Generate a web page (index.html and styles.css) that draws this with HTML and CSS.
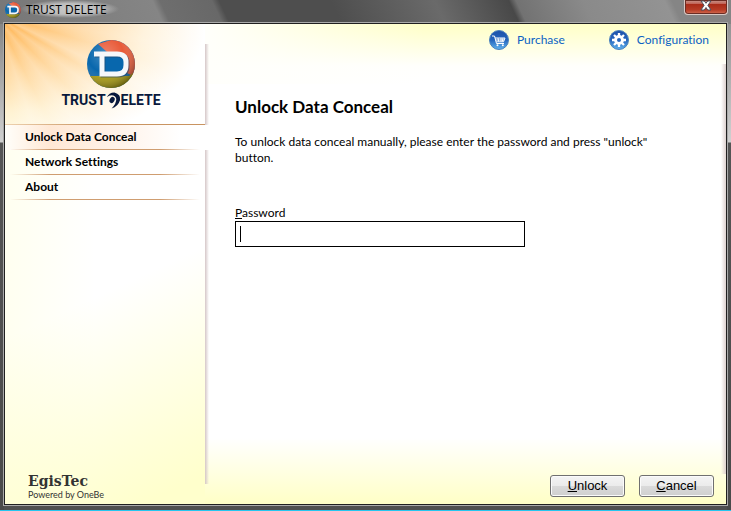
FILE: index.html
```html
<!DOCTYPE html>
<html lang="en">
<head>
<meta charset="utf-8">
<title>TRUST DELETE</title>
<link rel="stylesheet" href="styles.css">
</head>
<body>
<svg width="0" height="0" class="defs" aria-hidden="true">
  <defs>
    <radialGradient id="shade" cx="38%" cy="30%" r="75%">
      <stop offset="0" stop-color="#fff" stop-opacity=".25"/>
      <stop offset=".5" stop-color="#fff" stop-opacity="0"/>
      <stop offset="1" stop-color="#000" stop-opacity=".45"/>
    </radialGradient>
    <linearGradient id="blue" x1="0" y1="0" x2="0" y2="1">
      <stop offset="0" stop-color="#1d50a8"/>
      <stop offset=".5" stop-color="#2465bd"/>
      <stop offset="1" stop-color="#62b4ee"/>
    </linearGradient>
    <clipPath id="ball"><circle cx="24" cy="24" r="24"/></clipPath>
    <symbol id="globe" viewBox="0 0 48 48">
      <g clip-path="url(#ball)">
        <rect width="48" height="48" fill="#0867ad"/>
        <path d="M11 4L24 0H48V37L38 32L20 12Z" fill="#e85a38"/>
        <path d="M0 36H42L46 33V48H0Z" fill="#a99b0c"/>
        <rect width="48" height="48" fill="url(#shade)"/>
        <path d="M16 14H30Q39 14 39 22V25Q39 34 30 34H16Z" fill="#0867ad"/>
      </g>
      <path fill="none" stroke="#24466b" stroke-opacity=".6" stroke-width="5" d="M8 15H31Q40 15 40 23V26Q40 35 31 35H16V16"/>
      <path fill="none" stroke="#f5f7fa" stroke-width="5" d="M7 14H30Q39 14 39 22V25Q39 34 30 34H15V15"/>
    </symbol>
  </defs>
</svg>
<div class="window">
  <header class="titlebar">
    <svg class="app-icon"><use href="#globe"/></svg>
    <span class="app-title">TRUST DELETE</span>
    <button class="close" type="button" aria-label="Close">
      <svg viewBox="0 0 12 12" width="12" height="12"><path d="M1 1H4.300L6 3.300L7.700 1H11L7.900 5.300L11 10H7.700L6 7.500L4.300 10H1L4.100 5.300Z" fill="#fff" stroke="#4b4f5c" stroke-width="1"/></svg>
    </button>
  </header>
  <div class="client">
    <aside class="sidebar">
      <div class="brand">
        <svg class="brand-ball"><use href="#globe"/></svg>
        <div class="wordmark"><span>TRUST</span><svg viewBox="0 0 16 17" width="15" height="17"><path d="M1 5Q3 0 9 0Q16 2 15 8Q13 15 6 17Q11 12 11 7Q10 3 6 3Q3 3 1 5Z" fill="#08183c"/><ellipse cx="6.500" cy="8" rx="2.500" ry="3.500" transform="rotate(30 6.500 8)" fill="#08183c"/></svg><span>ELETE</span></div>
      </div>
      <nav class="nav">
        <a class="current" href="#unlock">Unlock Data Conceal</a>
        <a href="#network">Network Settings</a>
        <a href="#about">About</a>
      </nav>
      <footer class="maker"><strong>EgisTec</strong><span>Powered by OneBe</span></footer>
    </aside>
    <main class="main">
      <div class="links">
        <a href="#purchase"><svg viewBox="0 0 20 20" width="20" height="20"><circle cx="10" cy="10" r="9.500" fill="url(#blue)" stroke="#4a80bd" stroke-width="1"/><path d="M3 6H5.500L7.500 13.500H15M6 8H16L14.500 11.800H7.300M6.500 10H15.200M9 8L9.600 11.500M12 8V11.500M14 8L13.400 11.500" fill="none" stroke="#fff" stroke-width="1"/><circle cx="8.500" cy="15.200" r="1" fill="#fff"/><circle cx="13.800" cy="15.200" r="1" fill="#fff"/></svg>Purchase</a>
        <a href="#configuration"><svg viewBox="0 0 20 20" width="20" height="20"><circle cx="10" cy="10" r="9.500" fill="url(#blue)" stroke="#4a80bd" stroke-width="1"/><path d="M10 3V17M3 10H17M5 5L15 15M15 5L5 15" stroke="#fff" stroke-width="2.300"/><circle cx="10" cy="10" r="3.600" fill="none" stroke="#fff" stroke-width="2.600"/><circle cx="10" cy="10" r="2" fill="#2465bd"/></svg>Configuration</a>
      </div>
      <form class="unlock">
        <h1>Unlock Data Conceal</h1>
        <p>To unlock data conceal manually, please enter the password and press "unlock" button.</p>
        <label for="password"><u>P</u>assword</label>
        <div class="field"><input id="password" type="password"></div>
        <div class="actions">
          <button type="submit"><u>U</u>nlock</button>
          <button type="button"><u>C</u>ancel</button>
        </div>
      </form>
    </main>
  </div>
</div>
</body>
</html>
```
FILE: styles.css
```css
* { box-sizing: border-box; }
body {
  margin: 0;
  font: 12px/16px Lato, "Open Sans", sans-serif;
  font-variant-ligatures: none;
  color: #000;
}
a { text-decoration: none; }
.defs { position: absolute; }
.window {
  display: flex;
  flex-direction: column;
  min-height: 100vh;
  padding: 0 4px 5px;
  border-bottom: 1px solid #25c5ee;
  background:
    linear-gradient(65deg, #777 0, #858585 22%, #6e6e6e 23%, #686868 30%, #4e4e4e 31%, #4e4e4e 46%, #6a6a6a 60%, #484848 70%, #727272 71%, #8a8a8a 80%, #939393 91%, #858585 92%) top / 100% 24px no-repeat,
    linear-gradient(#777 0, #d0d0d0 142px, #555 143px, #4a4a4a 100%) left / 4px 100% no-repeat,
    linear-gradient(#888 0, #d0d0d0 142px, #555 143px, #4a4a4a 100%) right / 4px 100% no-repeat,
    #505050;
}
.titlebar {
  display: flex;
  align-items: flex-start;
  height: 23px;
}
.app-icon { width: 16px; height: 16px; margin: 2px 0 0 1px; }
.app-title {
  padding: 2px 12px 0 5px;
  font-family: "Open Sans", sans-serif;
  background: radial-gradient(ellipse closest-side, #c8c8c8 0, #bdbdbd 60%, transparent 100%);
}
.close {
  display: flex;
  justify-content: center;
  width: 44px;
  height: 15px;
  margin: 0 -1px 0 auto;
  padding: 0;
  border: 1px solid #d8c8c4;
  border-top: 0;
  border-radius: 0 0 4px 4px;
  background: linear-gradient(#c89a90 0, #c2675a 25%, #a92b18 30%, #b73c26 70%, #d46e52 100%);
  box-shadow: inset 0 0 0 1px #6b2c23;
}
.client {
  flex: 1;
  display: flex;
  border: 1px solid #202020;
  box-shadow: 0 0 0 1px #aaa;
  background:
    linear-gradient(to left, #ddd1cf, transparent) right 40px / 5px calc(100% - 70px) no-repeat,
    linear-gradient(to right, #fffffb 200px, transparent 420px) 0 0 / 100% 60px no-repeat,
    linear-gradient(#ffffc6 0, #fffffc 42px, #fff 60px, #fff calc(100% - 66px), #ffffc6 100%);
}
.sidebar {
  display: flex;
  flex-direction: column;
  flex: 0 0 204px;
  background:
    linear-gradient(to right, #d5c7c8, transparent) 200px 20px / 4px calc(100% - 40px) no-repeat,
    conic-gradient(from 90deg at -10px -10px, transparent 0, #fff2 10deg, transparent 17deg, #fff4 26deg, transparent 31deg, #fff3 37deg, transparent 45deg, #fff3 53deg, transparent 63deg, #fff3 71deg, transparent 80deg) 0 0 / 200px 100px no-repeat,
    radial-gradient(ellipse 200px 125px at 0 0, #ffae45e0, #ffc779a8 40%, #ffdfa466 70%, transparent) 0 0 / 200px 100% no-repeat,
    linear-gradient(155deg, transparent 55%, #ffffcc 95%) 0 0 / 200px 100% no-repeat,
    linear-gradient(to right, #fffff0, #fff 90px) 0 0 / 200px 100% no-repeat;
}
.brand {
  display: flex;
  flex-direction: column;
  align-items: center;
  width: 200px;
  height: 100px;
  padding: 16px 0 0 12px;
}
.brand-ball { width: 50px; height: 48px; }
.wordmark {
  display: flex;
  align-items: center;
  height: 24px;
  font: bold 14px/20px Roboto, "Liberation Sans", sans-serif;
  color: #08183c;
}
.nav {
  display: flex;
  flex-direction: column;
  background: linear-gradient(to right, #eed2b0, #c99461 45%, #c99461) 0 0 / 200px 1px no-repeat;
  padding-top: 1px;
}
.nav a {
  height: 25px;
  padding: 4px 20px 0;
  font-weight: bold;
  color: #000;
  background: linear-gradient(to right, transparent 5px, #cf9d70 45px, #cf9d70 155px, transparent 195px) 0 100% / 200px 1px no-repeat;
}
.nav .current {
  background:
    linear-gradient(to right, transparent 5px, #cf9d70 45px, #cf9d70 155px, transparent 195px) 0 100% / 200px 1px no-repeat,
    linear-gradient(to right, #fffefa, #ffe8d5 45px, #fff2e8 110px, #fff 175px);
}
.maker {
  display: flex;
  flex-direction: column;
  margin: auto 0 3px 23px;
  color: #333;
  font-size: 9px;
  line-height: 12px;
}
.maker strong { font: bold 14px/16px "DejaVu Serif", serif; }
.main {
  flex: 1;
  display: flex;
  flex-direction: column;
  padding: 6px 12px 7px 26px;
}
.links {
  display: flex;
  justify-content: flex-end;
  gap: 44px;
  padding-right: 5px;
}
.links a {
  display: flex;
  align-items: center;
  gap: 8px;
  color: #0b62c4;
}
.unlock { flex: 1; display: flex; flex-direction: column; align-items: flex-start; }
h1 { margin: 47px 0 17px; font-size: 17px; line-height: 20px; }
p { margin: 0 0 39px; max-width: 450px; }
.field { display: flex; width: 290px; max-width: 100%; padding: 4px; border: 1px solid #000; background: linear-gradient(#000, #000) 4px 50% / 1px 16px no-repeat #fff; }
.field input { flex: 1; width: 100%; height: 16px; padding: 0 2px; border: 0; outline: 0; background: transparent; }
.actions { display: flex; gap: 14px; margin: auto 0 0; align-self: flex-end; }
.actions button {
  width: 75px;
  height: 22px;
  padding: 0;
  border: 1px solid #707070;
  border-radius: 3px;
  background: linear-gradient(#f4f4f4, #ebebeb 50%, #dadada 51%, #cfcfcf);
  box-shadow: inset 0 0 0 1px #fbfbfb;
  font: 13px/18px "Liberation Sans", Arial, sans-serif;
  color: #000;
}
```
